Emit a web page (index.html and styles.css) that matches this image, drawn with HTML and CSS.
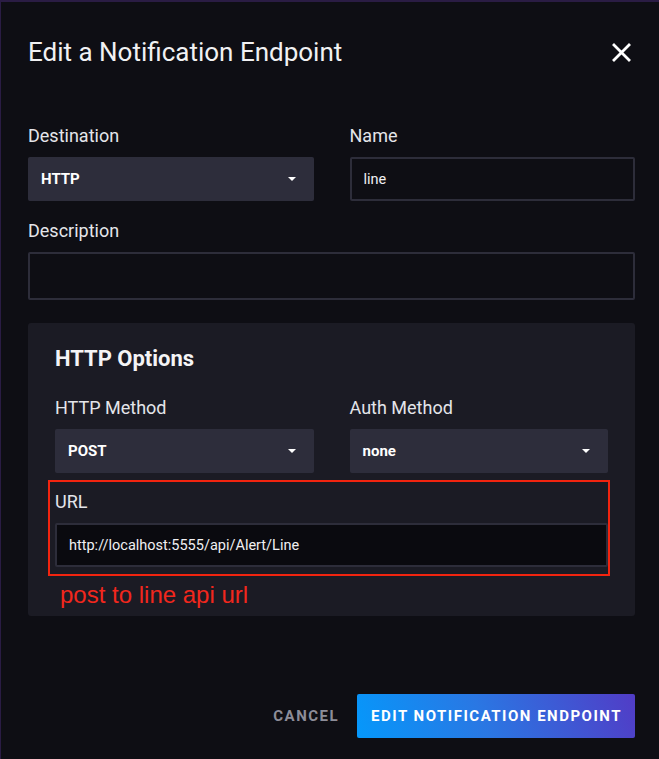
FILE: index.html
```html
<!DOCTYPE html>
<html lang="en">
<head>
<meta charset="utf-8">
<title>Edit a Notification Endpoint</title>
<link rel="stylesheet" href="styles.css">
</head>
<body>
<div class="overlay">
  <div class="header">
    <h1 class="title">Edit a Notification Endpoint</h1>
    <button class="close" aria-label="Close">
      <svg width="19" height="19" viewBox="0 0 19 19"><path d="M2 2 L17 17 M17 2 L2 17" stroke="#ffffff" stroke-width="2.8" stroke-linecap="square" fill="none"/></svg>
    </button>
  </div>
  <div class="form">
    <div class="field">
      <label class="label">Destination</label>
      <div class="dropdown"><span>HTTP</span><span class="caret"></span></div>
    </div>
    <div class="field">
      <label class="label">Name</label>
      <div class="input">line</div>
    </div>
    <div class="field full">
      <label class="label">Description</label>
      <div class="input tall"></div>
    </div>
    <div class="panel full">
      <h2 class="panel-title">HTTP Options</h2>
      <div class="panel-grid">
        <div class="field">
          <label class="label">HTTP Method</label>
          <div class="dropdown"><span>POST</span><span class="caret"></span></div>
        </div>
        <div class="field">
          <label class="label">Auth Method</label>
          <div class="dropdown"><span>none</span><span class="caret"></span></div>
        </div>
        <div class="field full url-field">
          <label class="label">URL</label>
          <div class="input dark url">http://localhost:5555/api/Alert/Line</div>
          <div class="highlight"></div>
          <div class="note">post to line api url</div>
        </div>
      </div>
    </div>
  </div>
  <div class="footer">
    <button class="cancel">CANCEL</button>
    <button class="submit">EDIT NOTIFICATION ENDPOINT</button>
  </div>
</div>
</body>
</html>
```
FILE: styles.css
```css
html, body {
  margin: 0;
  padding: 0;
}
body {
  background: #2a1c44;
  font-family: Roboto, "Liberation Sans", sans-serif;
  color: #e7e8eb;
  width: 659px;
  height: 759px;
  overflow: hidden;
}
.overlay {
  margin: 2px 0 0 1px;
  height: 757px;
  background: #0e0e14;
  display: flex;
  flex-direction: column;
}
.header {
  display: flex;
  align-items: center;
  justify-content: space-between;
  padding: 32px 28px 0 27px;
  height: 36px;
}
.title {
  margin: 0;
  font-size: 26px;
  font-weight: 400;
  line-height: 36px;
  color: #f1f1f3;
}
.close {
  background: none;
  border: 0;
  padding: 0;
  width: 19px;
  height: 19px;
  display: flex;
}
.form {
  display: grid;
  grid-template-columns: 1fr 1fr;
  column-gap: 36px;
  row-gap: 20px;
  padding: 56px 24px 0 27px;
}
.full {
  grid-column: 1 / -1;
}
.field {
  display: flex;
  flex-direction: column;
}
.label {
  font-size: 18px;
  line-height: 20px;
  margin-bottom: 11px;
  color: #e4e5ea;
}
.dropdown {
  height: 44px;
  box-sizing: border-box;
  background: #2d2d3b;
  border-radius: 2px;
  display: flex;
  align-items: center;
  justify-content: space-between;
  padding: 0 18px 0 13px;
  font-size: 15px;
  font-weight: 700;
  color: #ffffff;
}
.caret {
  width: 0;
  height: 0;
  border-left: 4.5px solid transparent;
  border-right: 4.5px solid transparent;
  border-top: 4px solid #ffffff;
}
.input {
  height: 44px;
  box-sizing: border-box;
  border: 2px solid #2d2d3a;
  border-radius: 2px;
  background: #0e0e14;
  display: flex;
  align-items: center;
  padding: 0 12px;
  font-size: 14.5px;
  color: #f0f0f2;
}
.input.tall {
  height: 48px;
}
.input.dark {
  background: #0a0a0f;
}
.panel {
  background: #1b1b24;
  border-radius: 3px;
  padding: 23px 27px 49px 27px;
  margin-top: 3px;
}
.panel-title {
  margin: 0 0 26px;
  font-size: 22px;
  font-weight: 700;
  line-height: 26px;
  color: #f4f4f6;
}
.panel-grid {
  display: grid;
  grid-template-columns: 1fr 1fr;
  column-gap: 36px;
  row-gap: 19px;
}
.url-field {
  position: relative;
}
.highlight {
  position: absolute;
  left: -7px;
  right: -2px;
  top: -12px;
  bottom: -9px;
  border: 2px solid #f2240f;
  pointer-events: none;
}
.note {
  position: absolute;
  left: 5px;
  top: 89px;
  font-family: "Liberation Sans", Arial, sans-serif;
  font-size: 24px;
  line-height: 28px;
  color: #f2271d;
  white-space: nowrap;
}
.footer {
  margin-top: auto;
  display: flex;
  justify-content: flex-end;
  align-items: center;
  gap: 18px;
  padding: 0 24px 21px 0;
}
.cancel {
  background: none;
  border: 0;
  font-family: inherit;
  font-size: 15px;
  font-weight: 700;
  letter-spacing: 1.5px;
  color: #8d8d99;
  padding: 0;
}
.submit {
  height: 44px;
  border: 0;
  border-radius: 2px;
  background: linear-gradient(70deg, #0598fb 0%, #2a77e3 45%, #513cc6 100%);
  color: #ffffff;
  font-family: inherit;
  font-size: 15px;
  font-weight: 700;
  letter-spacing: 1.5px;
  padding: 0 13px 0 14px;
}
```
